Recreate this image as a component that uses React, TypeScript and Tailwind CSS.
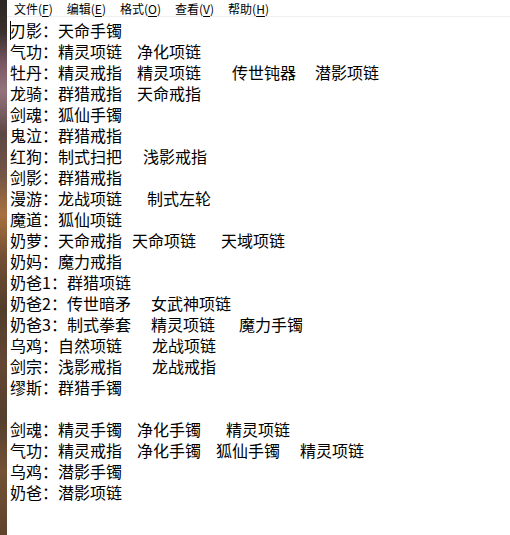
import React from "react";

type Item = { t: string; c?: string };
type Line = { label: string; items: Item[] };

const lines: Line[] = [
  { label: "刃影：", items: [{ t: "天命手镯" }] },
  { label: "气功：", items: [{ t: "精灵项链" }, { t: "净化项链", c: "ml-[15px]" }] },
  {
    label: "牡丹：",
    items: [
      { t: "精灵戒指" },
      { t: "精灵项链", c: "ml-[15px]" },
      { t: "传世钝器", c: "ml-[31px]" },
      { t: "潜影项链", c: "ml-[19px]" },
    ],
  },
  { label: "龙骑：", items: [{ t: "群猎戒指" }, { t: "天命戒指", c: "ml-[15px]" }] },
  { label: "剑魂：", items: [{ t: "狐仙手镯" }] },
  { label: "鬼泣：", items: [{ t: "群猎戒指" }] },
  { label: "红狗：", items: [{ t: "制式扫把" }, { t: "浅影戒指", c: "ml-[21px]" }] },
  { label: "剑影：", items: [{ t: "群猎戒指" }] },
  { label: "漫游：", items: [{ t: "龙战项链" }, { t: "制式左轮", c: "ml-[25px]" }] },
  { label: "魔道：", items: [{ t: "狐仙项链" }] },
  {
    label: "奶萝：",
    items: [
      { t: "天命戒指" },
      { t: "天命项链", c: "ml-[10px]" },
      { t: "天域项链", c: "ml-[25px]" },
    ],
  },
  { label: "奶妈：", items: [{ t: "魔力戒指" }] },
  { label: "奶爸1：", items: [{ t: "群猎项链" }] },
  { label: "奶爸2：", items: [{ t: "传世暗矛" }, { t: "女武神项链", c: "ml-[20px]" }] },
  {
    label: "奶爸3：",
    items: [
      { t: "制式拳套" },
      { t: "精灵项链", c: "ml-[20px]" },
      { t: "魔力手镯", c: "ml-[24px]" },
    ],
  },
  { label: "乌鸡：", items: [{ t: "自然项链" }, { t: "龙战项链", c: "ml-[30px]" }] },
  { label: "剑宗：", items: [{ t: "浅影戒指" }, { t: "龙战戒指", c: "ml-[30px]" }] },
  { label: "缪斯：", items: [{ t: "群猎手镯" }] },
  { label: "", items: [] },
  {
    label: "剑魂：",
    items: [
      { t: "精灵手镯" },
      { t: "净化手镯", c: "ml-[15px]" },
      { t: "精灵项链", c: "ml-[25px]" },
    ],
  },
  {
    label: "气功：",
    items: [
      { t: "精灵戒指" },
      { t: "净化手镯", c: "ml-[15px]" },
      { t: "狐仙手镯", c: "ml-[15px]" },
      { t: "精灵项链", c: "ml-[20px]" },
    ],
  },
  { label: "乌鸡：", items: [{ t: "潜影手镯" }] },
  { label: "奶爸：", items: [{ t: "潜影项链" }] },
];

const menus = [
  { name: "文件", key: "F" },
  { name: "编辑", key: "E" },
  { name: "格式", key: "O" },
  { name: "查看", key: "V" },
  { name: "帮助", key: "H" },
];

export default function App() {
  return (
    <div className="flex h-[535px] w-[510px] overflow-hidden bg-white font-['Noto_Sans_CJK_SC','Microsoft_YaHei',sans-serif] text-black">
      <div className="w-[7px] shrink-0 bg-[linear-gradient(to_bottom,#2c2725_0%,#3a302c_6%,#7a5866_12%,#94747c_17%,#5c4844_25%,#755646_33%,#a8703f_40%,#734f34_48%,#523d2b_58%,#634733_68%,#553f2d_78%,#735235_88%,#5f432b_100%)]" />
      <div className="flex min-w-0 flex-1 flex-col">
        <div className="flex h-[17px] items-center border-b border-[#f0f0f0] text-[12px] leading-[17px]">
          {menus.map((m) => (
            <div key={m.key} className="px-[7px] whitespace-pre">
              {m.name}(<span className="underline underline-offset-2">{m.key}</span>)
            </div>
          ))}
        </div>
        <div className="flex-1 pl-[3px] pt-[3px] text-[16px] leading-[21px]">
          {lines.map((l, i) => (
            <div key={i} className="relative flex h-[21px] whitespace-pre">
              {i === 0 && <div className="absolute left-0 top-[1px] h-[19px] w-px bg-black" />}
              <span>{l.label}</span>
              {l.items.map((it, j) => (
                <span key={j} className={it.c}>
                  {it.t}
                </span>
              ))}
            </div>
          ))}
        </div>
      </div>
    </div>
  );
}
